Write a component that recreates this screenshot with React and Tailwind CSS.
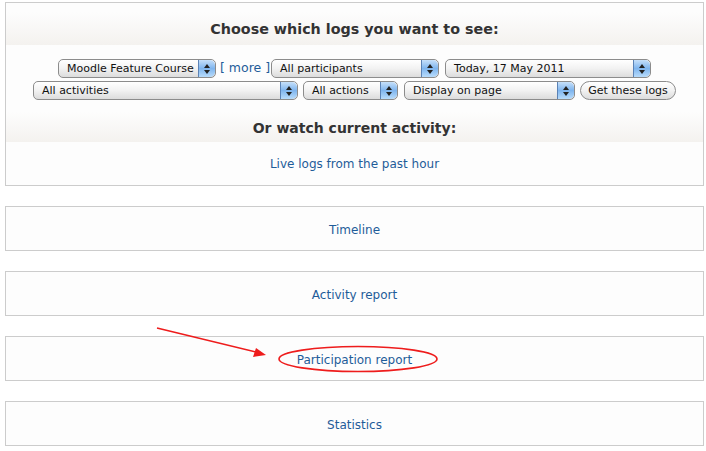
import React from 'react';

const font = { fontFamily: '"DejaVu Sans", Verdana, sans-serif' };

function Stepper() {
  return (
    <span className="flex h-full w-[17px] shrink-0 flex-col items-center justify-center gap-[2px] rounded-r-[5px] border-l border-[#5b82b5] bg-gradient-to-b from-[#c6e0fa] via-[#7fb5ee] to-[#b8dcfb]">
      <svg width="6" height="4" viewBox="0 0 6 4"><path d="M3 0L6 4H0z" fill="#222" /></svg>
      <svg width="6" height="4" viewBox="0 0 6 4"><path d="M0 0H6L3 4z" fill="#222" /></svg>
    </span>
  );
}

function Select({ label, className }) {
  return (
    <div className={`flex h-[19px] items-stretch overflow-hidden rounded-[5px] border border-[#8c8c8c] bg-gradient-to-b from-white via-[#f2f2f2] to-[#dcdcdc] text-[11px] text-[#111] ${className}`}>
      <span className="flex flex-1 items-center pl-[8px] leading-none">{label}</span>
      <Stepper />
    </div>
  );
}

function LinkBox({ label }) {
  return (
    <div className="flex h-[45px] items-center justify-center border border-[#cccccc] bg-[#fdfdfd] pt-[2px]">
      <a className="text-[12px] text-[#1f5c99]">{label}</a>
    </div>
  );
}

export default function App() {
  return (
    <div className="relative h-[451px] w-[706px] overflow-hidden bg-white pl-[5px] pr-[2px] pt-[2px]" style={font}>
      <div className="flex flex-col gap-[20px]">
        {/* log chooser */}
        <div className="flex h-[184px] flex-col border border-[#cccccc] bg-[#fdfdfd] pt-[9px]">
          <div className="flex h-[33px] items-center justify-center bg-gradient-to-b from-[#fdfdfd] to-[#f4f2ef] pt-[3px] text-[14.3px] font-bold text-[#333]">
            Choose which logs you want to see:
          </div>
          <div className="mt-[14px] flex flex-col items-center gap-[3px]">
            <div className="flex items-center">
              <Select label="Moodle Feature Course" className="w-[158px]" />
              <span className="ml-[4px] mr-[1px] text-[12.5px] text-[#1f5c99]">[ more ]</span>
              <Select label="All participants" className="w-[168px]" />
              <Select label="Today, 17 May 2011" className="ml-[6px] w-[206px]" />
            </div>
            <div className="flex items-center">
              <Select label="All activities" className="w-[265px]" />
              <Select label="All actions" className="ml-[5px] w-[95px]" />
              <Select label="Display on page" className="ml-[6px] w-[171px]" />
              <button className="ml-[5px] flex h-[19px] w-[96px] items-center justify-center rounded-full border border-[#8c8c8c] bg-gradient-to-b from-white via-[#f2f2f2] to-[#dcdcdc] text-[11px] leading-none text-[#111]">
                Get these logs
              </button>
            </div>
          </div>
          <div className="mt-[12px] flex h-[30px] items-center justify-center bg-gradient-to-b from-[#fdfdfd] to-[#f4f2ef] pt-[2px] text-[14px] font-bold text-[#333]">
            Or watch current activity:
          </div>
          <div className="flex flex-1 items-center justify-center pt-[1px]">
            <a className="text-[12px] text-[#1f5c99]">Live logs from the past hour</a>
          </div>
        </div>
        <LinkBox label="Timeline" />
        <LinkBox label="Activity report" />
        <LinkBox label="Participation report" />
        <LinkBox label="Statistics" />
      </div>

      {/* annotation */}
      <svg className="pointer-events-none absolute left-0 top-0" width="706" height="451">
        <line x1="157" y1="328" x2="256" y2="352" stroke="#ee1c1c" strokeWidth="1.6" />
        <path d="M266 355 L253 357 L256 348 Z" fill="#ee1c1c" />
        <ellipse cx="358" cy="359" rx="79" ry="12.5" fill="none" stroke="#ee1c1c" strokeWidth="1.6" />
      </svg>
    </div>
  );
}
